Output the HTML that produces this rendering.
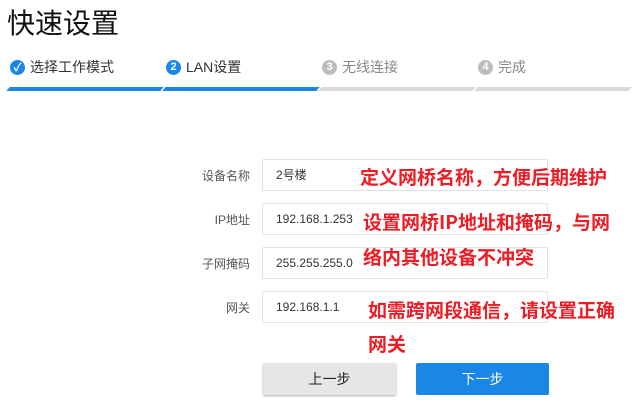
<!DOCTYPE html>
<html><head><meta charset="utf-8"><style>
body{margin:0;width:632px;height:403px;background:#fff;font-family:"Liberation Sans","Noto Sans CJK SC",sans-serif;position:relative;overflow:hidden}
.abs{position:absolute;white-space:nowrap}
.title{left:7px;top:2px;font-size:28px;color:#111}
.step{top:58px;font-size:14px;color:#333;display:flex;align-items:center;height:18px}
.step.off{color:#888}
.c{width:15px;height:15px;border-radius:50%;background:#1a86e6;color:#fff;font-size:11px;font-weight:bold;display:inline-flex;align-items:center;justify-content:center;margin-right:5px}
.off .c{background:#bdbdbd}
.bar{top:87px;height:4px;width:154px;transform:skewX(-40deg)}
.lbl{font-size:12px;color:#555;text-align:right;width:70px;left:180px}
.inp{left:262px;width:286px;height:32px;border:1px solid #e2e2e2;border-radius:2px;box-sizing:border-box;font-size:12px;color:#333;line-height:31px;padding-left:13px}
.red{color:#ee1c25;font-weight:bold;font-size:19px;font-family:"Noto Sans CJK SC",sans-serif}
.btn{top:363px;height:32px;width:133px;border-radius:2px;font-size:14px;text-align:center;line-height:32px}
</style></head><body>
<div class="abs title">快速设置</div>
<div class="abs step" style="left:10px"><span class="c">✓</span>选择工作模式</div>
<div class="abs step" style="left:166px"><span class="c">2</span>LAN设置</div>
<div class="abs step off" style="left:322px"><span class="c">3</span>无线连接</div>
<div class="abs step off" style="left:478px"><span class="c">4</span>完成</div>
<div class="abs bar" style="left:8px;background:#1a86e6"></div>
<div class="abs bar" style="left:164px;background:#1a86e6"></div>
<div class="abs bar" style="left:320px;background:#d9d9d9"></div>
<div class="abs bar" style="left:476px;background:#d9d9d9"></div>

<div class="abs lbl" style="top:167px">设备名称</div>
<div class="abs lbl" style="top:211px">IP地址</div>
<div class="abs lbl" style="top:255px">子网掩码</div>
<div class="abs lbl" style="top:299px">网关</div>
<div class="abs inp" style="top:159px">2号楼</div>
<div class="abs inp" style="top:203px">192.168.1.253</div>
<div class="abs inp" style="top:247px">255.255.255.0</div>
<div class="abs inp" style="top:291px">192.168.1.1</div>

<div class="abs red" style="left:360px;top:163px">定义网桥名称，方便后期维护</div>
<div class="abs red" style="left:363px;top:208px">设置网桥IP地址和掩码，与网</div>
<div class="abs red" style="left:363px;top:243px">络内其他设备不冲突</div>
<div class="abs red" style="left:368px;top:296px">如需跨网段通信，请设置正确</div>
<div class="abs red" style="left:368px;top:330px">网关</div>

<div class="abs btn" style="left:263px;background:#e6e6e6;color:#222;box-shadow:0 1px 2px #aaa">上一步</div>
<div class="abs btn" style="left:416px;background:#1a86e6;color:#fff">下一步</div>
</body></html>
